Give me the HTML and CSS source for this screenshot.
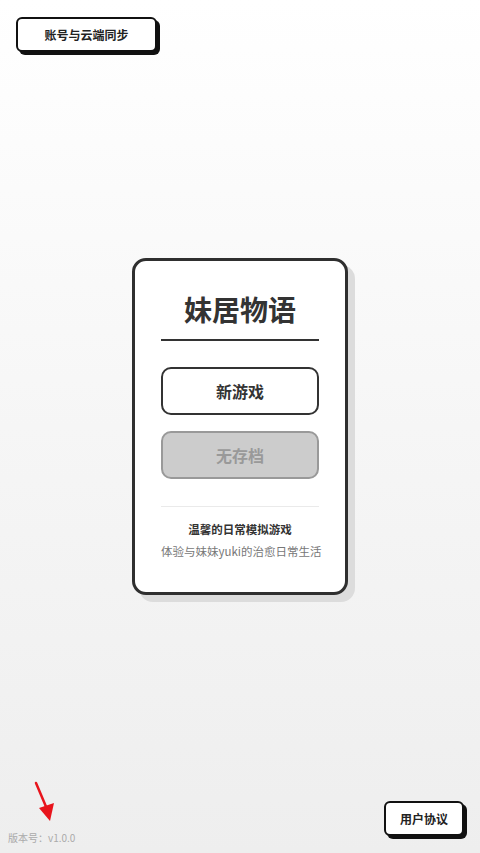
FILE: index.html
```html
<!DOCTYPE html>
<html lang="zh-CN">
<head>
    <meta charset="UTF-8">
    <meta name="viewport" content="width=device-width, initial-scale=1.0">
    <title>妹居物语</title>
    <link rel="stylesheet" href="styles.css">
</head>
<body>

<div class="screen">
    <header class="top-bar">
        <button class="pixel-btn sync-btn">账号与云端同步</button>
    </header>

    <main class="center">
        <section class="menu-card">
            <h1 class="game-title">妹居物语</h1>
            <button class="menu-btn">新游戏</button>
            <button class="menu-btn disabled" disabled>无存档</button>
            <div class="card-divider"></div>
            <p class="tagline">温馨的日常模拟游戏</p>
            <p class="subline">体验与妹妹yuki的治愈日常生活</p>
        </section>
    </main>

    <footer class="bottom-bar">
        <div class="version">
            <svg class="arrow" width="24" height="42" viewBox="0 0 24 42">
                <line x1="2" y1="2" x2="13" y2="28" stroke="#e8141c" stroke-width="2.5" stroke-linecap="round"/>
                <polygon points="5,27 20,22 16,40" fill="#e8141c"/>
            </svg>
            <span>版本号：v1.0.0</span>
        </div>
        <button class="pixel-btn agree-btn">用户协议</button>
    </footer>
</div>

</body>
</html>
```

FILE: styles.css
```css
html, body {
    margin: 0;
    padding: 0;
}

body {
    font-family: "Noto Sans CJK SC", "Noto Sans", sans-serif;
    background: linear-gradient(to bottom, #ffffff 0%, #f6f6f6 50%, #eeeeee 100%);
    color: #333;
}

.screen {
    height: 853px;
    display: flex;
    flex-direction: column;
}

.top-bar {
    padding: 17px 0 0 16px;
}

.pixel-btn {
    font-family: inherit;
    font-weight: bold;
    font-size: 12px;
    color: #222;
    background: #fff;
    border: 2px solid #111;
    border-radius: 6px;
    box-shadow: 3px 3px 0 #111;
    cursor: pointer;
}

.sync-btn {
    width: 141px;
    height: 35px;
}

.center {
    flex: 1;
    display: flex;
    justify-content: center;
    padding-top: 206px;
}

.menu-card {
    width: 158px;
    height: 275px;
    padding: 30px 26px 26px;
    background: #fff;
    border: 3px solid #2f2f2f;
    border-radius: 14px;
    box-shadow: 7px 7px 0 #dcdcdc;
    display: flex;
    flex-direction: column;
}

.game-title {
    margin: 0 0 26px;
    padding-bottom: 12px;
    font-size: 28px;
    line-height: 36px;
    font-weight: bold;
    text-align: center;
    color: #333;
    border-bottom: 2px solid #333;
}

.menu-btn {
    height: 48px;
    font-family: inherit;
    font-size: 16px;
    font-weight: bold;
    color: #333;
    background: #fff;
    border: 2px solid #333;
    border-radius: 10px;
    cursor: pointer;
}

.menu-btn + .menu-btn {
    margin-top: 16px;
}

.menu-btn.disabled {
    background: #cccccc;
    border-color: #999;
    color: #999;
    cursor: default;
}

.card-divider {
    height: 1px;
    background: #eaeaea;
    margin: 27px 0 12px;
}

.tagline {
    margin: 0;
    font-size: 11.5px;
    line-height: 20px;
    font-weight: bold;
    text-align: center;
    color: #333;
}

.subline {
    margin: 2px 0 0;
    font-size: 11.5px;
    line-height: 20px;
    text-align: center;
    color: #777;
    white-space: nowrap;
}

.bottom-bar {
    display: flex;
    justify-content: space-between;
    align-items: flex-end;
    padding: 0 16px 17px 8px;
}

.version {
    position: relative;
    font-size: 10px;
    line-height: 14px;
    color: #aaa;
    margin-bottom: -9px;
}

.version .arrow {
    position: absolute;
    left: 26px;
    top: -50px;
}

.agree-btn {
    width: 80px;
    height: 35px;
}
```
